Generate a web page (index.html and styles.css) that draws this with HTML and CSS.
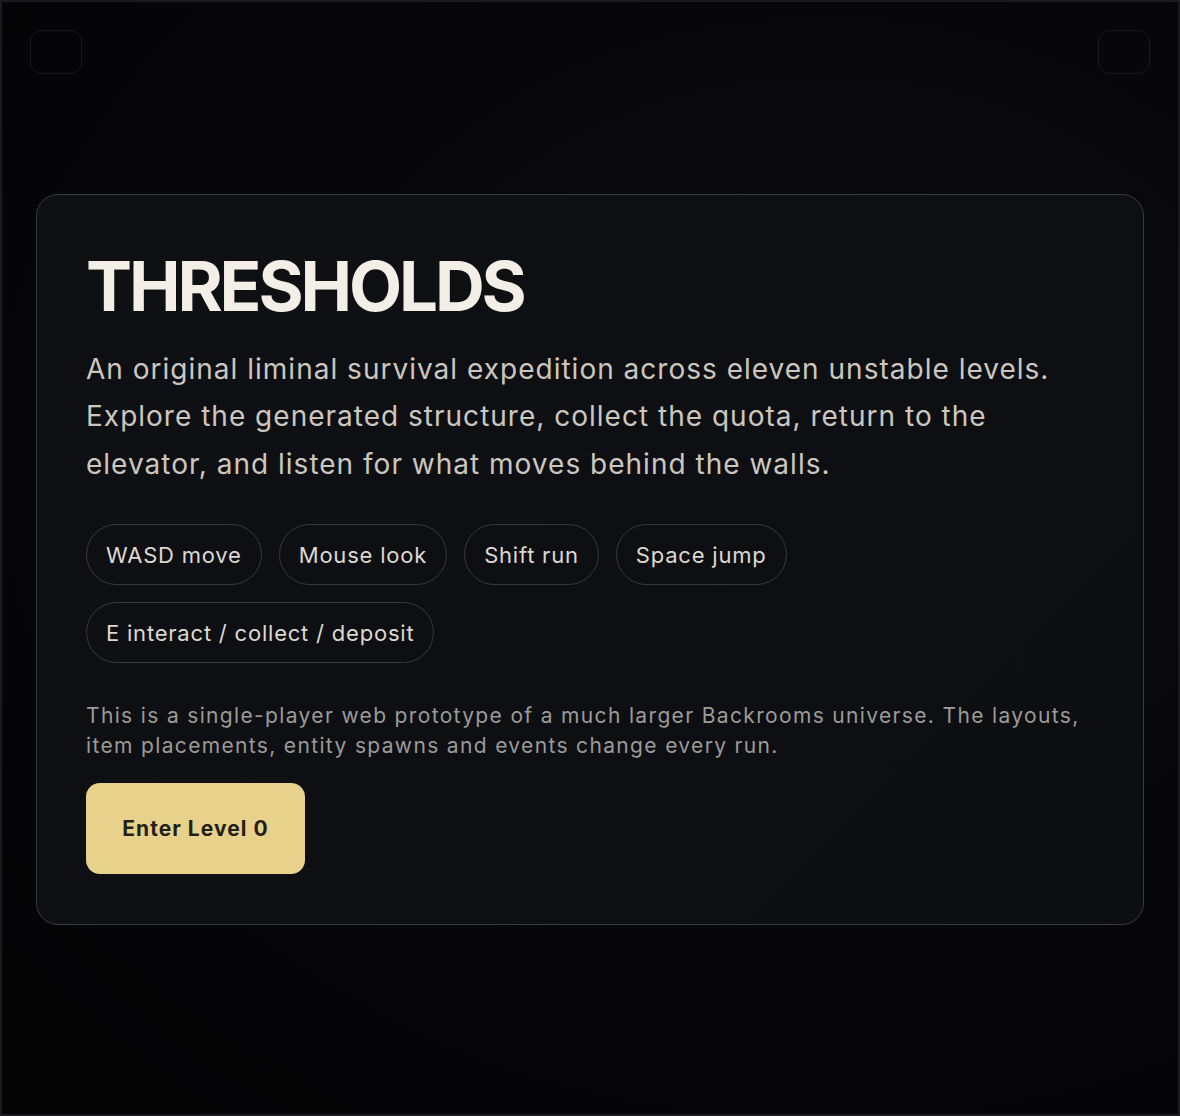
FILE: index.html
```html
<!DOCTYPE html>
<html lang="en">
<head>
<meta charset="utf-8">
<title>Thresholds</title>
<link rel="stylesheet" href="styles.css">
</head>
<body>
<div class="screen">
  <button class="corner corner-left" aria-label="Menu"></button>
  <button class="corner corner-right" aria-label="Settings"></button>
  <main class="card">
    <h1 class="title">THRESHOLDS</h1>
    <p class="lead">An original liminal survival expedition across eleven unstable levels. Explore the generated structure, collect the quota, return to the elevator, and listen for what moves behind the walls.</p>
    <ul class="chips">
      <li class="chip">WASD move</li>
      <li class="chip">Mouse look</li>
      <li class="chip">Shift run</li>
      <li class="chip">Space jump</li>
      <li class="chip">E interact / collect / deposit</li>
    </ul>
    <p class="note">This is a single-player web prototype of a much larger Backrooms universe. The layouts, item placements, entity spawns and events change every run.</p>
    <button class="enter">Enter Level 0</button>
  </main>
</div>
</body>
</html>
```
FILE: styles.css
```css
* { box-sizing: border-box; }
html, body { margin: 0; padding: 0; height: 100%; }
body {
  background: #050507;
  font-family: Inter, "Noto Sans", sans-serif;
}
.screen {
  position: relative;
  height: 1116px;
  border: 2px solid #1b1b1d;
  background: radial-gradient(ellipse at 70% 40%, #0d0d10 0%, #060608 60%, #040405 100%);
  display: flex;
  align-items: center;
  justify-content: center;
  padding: 2px 34px 0;
}
.corner {
  position: absolute;
  top: 28px;
  width: 52px;
  height: 44px;
  border-radius: 12px;
  border: 1.5px solid #19191b;
  background: transparent;
  padding: 0;
}
.corner-left { left: 28px; }
.corner-right { right: 28px; }
.card {
  width: 100%;
  height: 731px;
  border: 1.5px solid #3b3b3e;
  border-radius: 22px;
  background: linear-gradient(135deg, #0f1013 0%, #0d0e11 100%);
  padding: 51px 49px 0 49px;
  display: flex;
  flex-direction: column;
  align-items: flex-start;
}
.title {
  margin: 0;
  font-size: 69px;
  line-height: 80px;
  font-weight: 700;
  letter-spacing: -0.045em;
  color: #f3efe7;
}
.lead {
  margin: 20px 0 0;
  font-size: 28px;
  line-height: 47.5px;
  color: #cbc7bf;
  letter-spacing: 0.036em;
}
.chips {
  list-style: none;
  margin: 36px 0 0;
  padding: 0;
  display: flex;
  flex-wrap: wrap;
  gap: 17px 17px;
  max-width: 760px;
}
.chip {
  height: 61px;
  padding: 0 19px;
  display: flex;
  align-items: center;
  border: 1.5px solid #3a3a3d;
  border-radius: 999px;
  font-size: 22px;
  color: #ddd9d1;
  letter-spacing: 0.036em;
}
.note {
  margin: 38px 0 0;
  font-size: 21px;
  line-height: 30px;
  color: #9c9b98;
  letter-spacing: 0.064em;
}
.enter {
  margin-top: 22px;
  width: 219px;
  height: 91px;
  border: none;
  border-radius: 14px;
  background: #e8d18b;
  color: #241f15;
  font-family: Inter, "Noto Sans", sans-serif;
  font-size: 21px;
  font-weight: 700;
  letter-spacing: 0.05em;
}
```
